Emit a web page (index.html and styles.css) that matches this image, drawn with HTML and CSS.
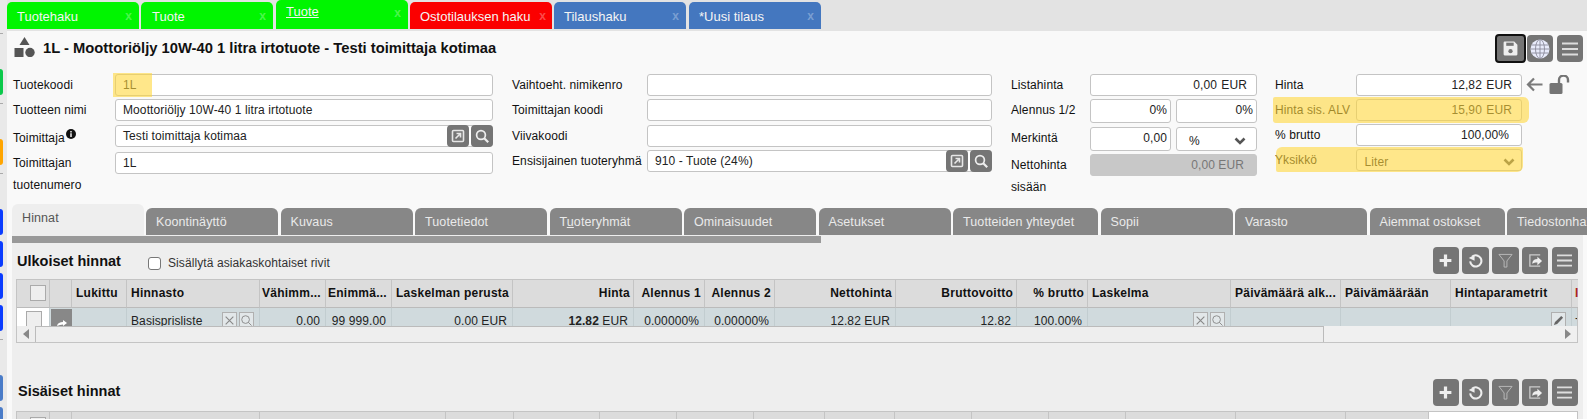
FILE: index.html
```html
<!DOCTYPE html>
<html lang="fi">
<head>
<meta charset="utf-8">
<title>Tuote</title>
<link rel="stylesheet" href="styles.css">
</head>
<body>
<div class="app">
  <aside class="strip">
    <i class="sep s1"></i>
    <i class="dot green d1"></i>
    <i class="sep s2"></i>
    <i class="dot orange d2"></i>
    <i class="sep s2"></i>
    <i class="dot blue d2"></i>
    <i class="dot blue d3"></i>
    <i class="dot blue d3"></i>
    <i class="dot blue d3"></i>
    <i class="sep s3"></i>
    <i class="dot lblue d4"></i>
    <i class="dot lblue d3"></i>
  </aside>
  <div class="main">
    <nav class="tabbar">
      <a class="tab green-t">Tuotehaku<span class="x">x</span></a>
      <a class="tab green-t active">Tuote<span class="x">x</span></a>
      <a class="tab green-t raised"><span class="ul">Tuote</span><span class="x">x</span></a>
      <a class="tab red-t">Ostotilauksen haku<span class="x">x</span></a>
      <a class="tab blue-t">Tilaushaku<span class="x">x</span></a>
      <a class="tab blue-t">*Uusi tilaus<span class="x">x</span></a>
    </nav>

    <header class="head">
      <svg class="shapes" viewBox="0 0 21 20"><path d="M10.5 0l5 8h-10z"/><rect x="0.5" y="11" width="9" height="9"/><circle cx="16" cy="15.500" r="4.700"/></svg>
      <h1 class="title">1L - Moottoriöljy 10W-40 1 litra irtotuote - Testi toimittaja kotimaa</h1>
      <div class="head-btns">
        <button class="btn save"><svg viewBox="0 0 16 16"><path fill="#eee" d="M1.5 2.5a1 1 0 0 1 1-1h9l3 3v9a1 1 0 0 1-1 1h-11a1 1 0 0 1-1-1z"/><rect x="4" y="2.500" width="7" height="3" fill="#757575"/><circle cx="8" cy="10.500" r="2" fill="#757575"/></svg></button>
        <button class="btn globe-b"><svg viewBox="0 0 20 20"><circle cx="10" cy="10" r="9.500" fill="#e8ebfb"/><g fill="none" stroke="#8a8a9a" stroke-width=".9"><ellipse cx="10" cy="10" rx="4.500" ry="9.500"/><path d="M10 .5v19M1.500 6h17M.5 10h19M1.500 14h17"/></g></svg></button>
        <button class="btn burger-b"><svg viewBox="0 0 16 14"><path d="M0 1.500h16M0 7h16M0 12.500h16" stroke="#ddd" stroke-width="2"/></svg></button>
      </div>
    </header>

    <section class="form">
      <div class="col c1">
        <div class="row r-a"><label class="lab">Tuotekoodi</label><div class="inp">1L<b class="mark-code"></b></div></div>
        <div class="row r-b"><label class="lab">Tuotteen nimi</label><div class="inp">Moottoriöljy 10W-40 1 litra irtotuote</div></div>
        <div class="row r-c"><label class="lab low">Toimittaja<svg class="info" viewBox="0 0 10 10"><circle cx="5" cy="5" r="5"/><path d="M4.300 2h1.400v1.400H4.300zM4.300 4.300h1.400V8H4.300z" fill="#fff"/></svg></label><div class="inp with-btns">Testi toimittaja kotimaa<span class="ibtns"><button class="ib"><svg viewBox="0 0 14 14"><rect x="1.500" y="1.500" width="11" height="11" rx="1" fill="none" stroke="#e6e6e6" stroke-width="1.600"/><path d="M4.500 9.500L9 5M5.500 4.500h4v4" fill="none" stroke="#e6e6e6" stroke-width="1.600"/></svg></button><button class="ib"><svg viewBox="0 0 14 14"><circle cx="6" cy="6" r="4.400" fill="none" stroke="#eee" stroke-width="1.700"/><path d="M9.200 9.200l4 4" stroke="#eee" stroke-width="2.200"/></svg></button></span></div></div>
        <div class="row r-d"><label class="lab tall">Toimittajan tuotenumero</label><div class="inp">1L</div></div>
      </div>

      <div class="col c2">
        <div class="row r-a"><label class="lab">Vaihtoeht. nimikenro</label><div class="inp"></div></div>
        <div class="row r-b"><label class="lab">Toimittajan koodi</label><div class="inp"></div></div>
        <div class="row r-c"><label class="lab">Viivakoodi</label><div class="inp"></div></div>
        <div class="row r-e"><label class="lab">Ensisijainen tuoteryhmä</label><div class="inp with-btns">910 - Tuote (24%)<span class="ibtns"><button class="ib"><svg viewBox="0 0 14 14"><rect x="1.500" y="1.500" width="11" height="11" rx="1" fill="none" stroke="#e6e6e6" stroke-width="1.600"/><path d="M4.500 9.500L9 5M5.500 4.500h4v4" fill="none" stroke="#e6e6e6" stroke-width="1.600"/></svg></button><button class="ib"><svg viewBox="0 0 14 14"><circle cx="6" cy="6" r="4.400" fill="none" stroke="#eee" stroke-width="1.700"/><path d="M9.200 9.200l4 4" stroke="#eee" stroke-width="2.200"/></svg></button></span></div></div>
      </div>

      <div class="col c3">
        <div class="row r-a"><label class="lab">Listahinta</label><div class="inp num">0,00 EUR</div></div>
        <div class="row r-f"><label class="lab">Alennus 1/2</label><div class="pair"><div class="inp num tight">0%</div><div class="inp num tight">0%</div></div></div>
        <div class="row r-g"><label class="lab">Merkintä</label><div class="pair"><div class="inp num tight">0,00</div><div class="inp sel unit">%<svg class="chev" viewBox="0 0 12 8"><path d="M1.500 1.500L6 6l4.500-4.500" fill="none" stroke="#555" stroke-width="2.600"/></svg></div></div></div>
        <div class="row r-h"><label class="lab tall">Nettohinta sisään</label><div class="inp num dis">0,00 EUR</div></div>
      </div>

      <div class="col c4">
        <div class="row r-a"><label class="lab">Hinta</label><div class="inp num">12,82 EUR</div>
          <svg class="arrow" viewBox="0 0 17 15"><path d="M16.500 7.500H2M8 1.500L2 7.500l6 6" fill="none" stroke="#7a7a7a" stroke-width="2.200"/></svg>
          <svg class="lock" viewBox="0 0 21 19"><rect x="0.500" y="8" width="13" height="11" rx="1.500" fill="#757575"/><path d="M10 8V5a4.500 4.500 0 0 1 9 0v2.500" fill="none" stroke="#757575" stroke-width="2.400"/></svg>
        </div>
        <div class="row r-i hl hl-a"><label class="lab">Hinta sis. ALV</label><div class="inp num">15,90 EUR</div></div>
        <div class="row r-j"><label class="lab">% brutto</label><div class="inp num pct">100,00%</div></div>
        <div class="row r-k hl hl-b"><label class="lab">Yksikkö</label><div class="inp sel">Liter<svg class="chev" viewBox="0 0 12 8"><path d="M1.500 1.500L6 6l4.500-4.500" fill="none" stroke="#555" stroke-width="2.600"/></svg></div></div>
      </div>
    </section>

    <nav class="subtabs">
      <a class="st current">Hinnat</a>
      <a class="st">Koontinäyttö</a>
      <a class="st">Kuvaus</a>
      <a class="st">Tuotetiedot</a>
      <a class="st">T<u>u</u>oteryhmät</a>
      <a class="st">Ominaisuudet</a>
      <a class="st">Asetukset</a>
      <a class="st wide">Tuotteiden yhteydet</a>
      <a class="st">Sopii</a>
      <a class="st">Varasto</a>
      <a class="st mid">Aiemmat ostokset</a>
      <a class="st last">Tiedostonhallinta</a>
    </nav>

    <section class="panel">
      <div class="bar"></div>
      <div class="sec-head first">
        <h2 class="sec-title">Ulkoiset hinnat</h2>
        <label class="chk"><i class="box"></i>Sisällytä asiakaskohtaiset rivit</label>
        <div class="tools">
          <button class="btn tb"><svg viewBox="0 0 14 14"><path d="M7 1.500v11M1.500 7h11" stroke="#eee" stroke-width="3"/></svg></button>
          <button class="btn tb"><svg viewBox="0 0 16 16"><path d="M4.500 3.800A6 6 0 1 1 2.300 9" fill="none" stroke="#eee" stroke-width="2.200"/><path d="M0.800 5.300L7 1.800V8.300z" fill="#eee"/></svg></button>
          <button class="btn tb"><svg viewBox="0 0 16 16"><path d="M1 1.500h14L9.500 8.500V15h-3V8.500z" fill="none" stroke="#bbb" stroke-width="1"/></svg></button>
          <button class="btn tb"><svg viewBox="0 0 16 16"><path d="M13 2H2v12h11" fill="none" stroke="#ccc" stroke-width="1.400"/><path d="M4.500 11c.5-3 2.500-4.500 5.500-4.500V4l5 4.500-5 4.500v-3c-2.500 0-4 .3-5.500 1.500z" fill="#eee"/></svg></button>
          <button class="btn tb"><svg viewBox="0 0 16 16"><path d="M0 2.500h16M0 8h16M0 13.500h16" stroke="#ddd" stroke-width="2"/></svg></button>
        </div>
      </div>
      <div class="tbl">
        <div class="grid ext hdr">
          <div class="c"><i class="cb"></i></div><div class="c"></div>
          <div class="c">Lukittu</div><div class="c">Hinnasto</div><div class="c cut">Vähimm...</div><div class="c cut">Enimmä...</div>
          <div class="c r">Laskelman perusta</div><div class="c r">Hinta</div><div class="c r">Alennus 1</div><div class="c r">Alennus 2</div>
          <div class="c r">Nettohinta</div><div class="c r">Bruttovoitto</div><div class="c r">% brutto</div><div class="c">Laskelma</div>
          <div class="c">Päivämäärä alk...</div><div class="c">Päivämäärään</div><div class="c">Hintaparametrit</div><div class="c lastc">I</div>
        </div>
        <div class="grid ext body">
          <div class="d white"><i class="cb"></i></div><div class="d dark"><svg viewBox="0 0 12 8"><path d="M1 7c.5-3 3-4 6-4V1l4 3-4 3V5.500C5 5.500 3 6 1 7z" fill="#fff"/></svg></div>
          <div class="d"></div><div class="d">Basisprisliste<span class="mini"><i class="m"><svg viewBox="0 0 10 10"><path d="M1.500 1.500l7 7M8.500 1.500l-7 7" stroke="#888"/></svg></i><i class="m"><svg viewBox="0 0 12 12"><circle cx="5" cy="5" r="4.200" fill="none" stroke="#888"/><path d="M8 8l3.500 3.500" stroke="#888"/></svg></i></span></div>
          <div class="d r">0.00</div><div class="d r">99 999.00</div><div class="d r">0.00 EUR</div><div class="d r"><b>12.82</b>&nbsp;EUR</div>
          <div class="d r">0.00000%</div><div class="d r">0.00000%</div><div class="d r">12.82 EUR</div><div class="d r">12.82</div><div class="d r">100.00%</div>
          <div class="d"><span class="mini"><i class="m"><svg viewBox="0 0 10 10"><path d="M1.500 1.500l7 7M8.500 1.500l-7 7" stroke="#888"/></svg></i><i class="m"><svg viewBox="0 0 12 12"><circle cx="5" cy="5" r="4.200" fill="none" stroke="#888"/><path d="M8 8l3.500 3.500" stroke="#888"/></svg></i></span></div>
          <div class="d"></div><div class="d"></div>
          <div class="d"><span class="mini"><i class="m"><svg viewBox="0 0 12 12"><path d="M1 11l1.200-3.500L9 1l2 2-6.500 6.800z" fill="#666"/></svg></i></span></div>
          <div class="d lastd">-</div>
        </div>
        <div class="scroll">
          <span class="sb-btn"><i class="tri-l"></i></span>
          <span class="thumb"></span>
          <span class="sb-btn end"><i class="tri-r"></i></span>
        </div>
      </div>
      <div class="sec-head second">
        <h2 class="sec-title">Sisäiset hinnat</h2>
        <div class="tools">
          <button class="btn tb"><svg viewBox="0 0 14 14"><path d="M7 1.500v11M1.500 7h11" stroke="#eee" stroke-width="3"/></svg></button>
          <button class="btn tb"><svg viewBox="0 0 16 16"><path d="M4.500 3.800A6 6 0 1 1 2.300 9" fill="none" stroke="#eee" stroke-width="2.200"/><path d="M0.800 5.300L7 1.800V8.300z" fill="#eee"/></svg></button>
          <button class="btn tb"><svg viewBox="0 0 16 16"><path d="M1 1.500h14L9.500 8.500V15h-3V8.500z" fill="none" stroke="#bbb" stroke-width="1"/></svg></button>
          <button class="btn tb"><svg viewBox="0 0 16 16"><path d="M13 2H2v12h11" fill="none" stroke="#ccc" stroke-width="1.400"/><path d="M4.500 11c.5-3 2.500-4.500 5.500-4.500V4l5 4.500-5 4.500v-3c-2.500 0-4 .3-5.500 1.500z" fill="#eee"/></svg></button>
          <button class="btn tb"><svg viewBox="0 0 16 16"><path d="M0 2.500h16M0 8h16M0 13.500h16" stroke="#ddd" stroke-width="2"/></svg></button>
        </div>
      </div>
      <div class="tbl t2">
        <div class="grid int hdr">
          <div class="c"><i class="cb"></i></div><div class="c"></div><div class="c"></div><div class="c"></div><div class="c"></div><div class="c"></div><div class="c"></div><div class="c"></div><div class="c"></div><div class="c"></div><div class="c"></div><div class="c"></div><div class="c"></div><div class="c"></div><div class="c"></div><div class="c"></div><div class="c blank"></div>
        </div>
      </div>
    </section>
  </div>
</div>
</body>
</html>
```

FILE: styles.css
```css
* { box-sizing: border-box; }
html, body { margin: 0; height: 419px; overflow: hidden; }
body { font: 12px "Liberation Sans", Arial, sans-serif; letter-spacing: .1px; color: #111; background: #f9f9f9; }
button { border: 0; padding: 0; font: inherit; }
i { font-style: normal; }

.app { display: flex; width: 1587px; height: 419px; overflow: hidden; }

/* left strip */
.strip { flex: 0 0 7px; background: #e9e9e9; display: flex; flex-direction: column; align-items: flex-start; }
.sep { width: 3px; height: 1px; background: #aaa; flex: none; }
.dot { width: 3px; height: 26px; flex: none; border-radius: 0 3px 3px 0; }
.s1 { margin-top: 33px; }
.s2 { margin-top: 8px; }
.s3 { margin-top: 8px; }
.d1 { margin-top: 35px; }
.d2 { margin-top: 35px; }
.d3 { margin-top: 6px; }
.d4 { margin-top: 35px; }
.green { background: #0ac94a; }
.orange { background: #ffa500; }
.blue { background: #0a3cff; }
.lblue { background: #4a7cc8; }

.main { flex: 1; min-width: 0; }

/* top tabs */
.tabbar { display: flex; align-items: flex-end; height: 31px; background: #e3e3e3; padding-bottom: 2px; gap: 2px; }
.tab { flex: 0 0 132px; height: 27px; border-radius: 5px 5px 0 0; color: #f4f4f4; font-size: 13px; line-height: 29px; padding: 0 7px 0 10px; display: flex; justify-content: space-between; letter-spacing: 0; }
.active { padding-left: 11px; margin-right: 1px; }
.raised { height: 29px; line-height: 24px; }
.ul { text-decoration: underline; }
.raised .x { line-height: 26px; }
.tab.red-t { flex-basis: 142px; padding-right: 6px; }
.green-t { background: #00f500; }
.red-t { background: #fb0000; }
.blue-t { background: #4477bf; }
.blue-t + .blue-t { margin-left: 1px; }
.x { color: rgba(255,255,255,.3); font-weight: 700; font-size: 12px; }

/* title */
.head { display: flex; align-items: flex-start; height: 33px; }
.shapes { width: 21px; height: 20px; margin: 6px 0 0 7px; fill: #555; flex: none; }
.title { margin: 8px 0 0 8px; font-size: 14.750px; line-height: 18px; font-weight: 700; color: #111; letter-spacing: 0; }
.head-btns { margin-left: auto; margin-right: 4px; display: flex; align-items: flex-start; margin-top: 3px; }
.btn { background: #757575; border-radius: 4px; display: flex; align-items: center; justify-content: center; flex: none; }
.save { width: 31px; height: 29px; border: 2px solid #111; margin-right: 1px; }
.save svg { width: 17px; height: 17px; }
.globe-b { width: 26px; height: 27px; margin: 1px 4px 0 0; }
.globe-b svg { width: 20px; height: 20px; }
.burger-b { width: 26px; height: 27px; margin-top: 1px; }
.burger-b svg { width: 16px; height: 14px; }

/* form */
.form { height: 140px; display: grid; grid-template-columns: 505px 499px 264px 1fr; padding-top: 10px; }
.col { display: flex; flex-direction: column; }
.c1 { padding-left: 6px; }
.row { display: flex; align-items: flex-start; position: relative; flex: none; }
.lab { flex: none; line-height: 22px; color: #111; }
.c1 .lab { width: 102px; }
.c2 .lab { width: 135px; }
.c3 .lab { width: 79px; }
.c4 .lab { width: 80.500px; }
.inp { flex: 1; height: 22px; background: #fff; border: 1px solid #c4c4c4; border-radius: 3px; line-height: 20px; padding: 0 7px; min-width: 0; position: relative; white-space: nowrap; color: #222; }
.num { text-align: right; padding-right: 9px; word-spacing: 1px; }
.pct { padding-right: 12px; }
.tight { padding-right: 3px; height: 100%; }
.c1 .inp { flex: 0 0 378px; }
.c2 .inp { flex: 0 0 345px; }
.c3 .inp, .c3 .pair { flex: 0 0 167px; }
.c4 .inp { flex: 0 0 166.500px; }
.r-a { height: 22px; }
.r-b { height: 22px; margin-top: 3px; }
.r-c { height: 22px; margin-top: 4px; }
.r-d { height: 22px; margin-top: 5px; }
.r-e { height: 22px; margin-top: 3px; }
.r-f { height: 24px; margin-top: 3px; }
.r-g { height: 24px; margin-top: 4px; }
.r-h { height: 22px; margin-top: 3px; }
.r-i { height: 22px; margin-top: 3px; }
.r-j { height: 22px; margin-top: 3px; }
.r-k { height: 22px; margin-top: 3px; }
.low { line-height: 26px; height: 22px; }
.tall { white-space: normal; }
.info { width: 10px; height: 10px; fill: #111; margin-left: 1px; vertical-align: 3px; }
.pair { display: flex; justify-content: space-between; height: 100%; }
.pair .inp { flex: 0 0 81px; }
.dis { background: #c8c8c8; border-color: #c8c8c8; color: #777; padding-right: 12px; word-spacing: 0; }
.sel { padding-left: 8px; line-height: 24px; }
.unit { padding-left: 12px; line-height: 26px; height: 100%; }
.chev { position: absolute; right: 6px; top: 8px; width: 12px; height: 8px; }
.pair .chev { right: 10px; top: 9px; }
.with-btns { padding-right: 46px; }
.ibtns { position: absolute; right: -1px; top: -1px; display: flex; gap: 2px; }
.ib { width: 22px; height: 22px; background: #757575; border-radius: 4px; display: flex; align-items: center; justify-content: center; }
.ib svg { width: 14px; height: 14px; }
.arrow { width: 17px; height: 15px; margin: 3px 0 0 4px; flex: none; }
.lock { width: 21px; height: 19px; margin: 1px 0 0 6px; flex: none; }

/* highlighter marks, laid over the fields */
.hl::after, .mark-code { content: ""; position: absolute; background: rgba(255,215,60,.6); pointer-events: none; }
.hl-a::after { left: -2px; width: 255.500px; top: -2px; bottom: -2px; border-radius: 2px 6px 6px 3px; }
.hl-b::after { left: 1px; width: 247px; top: -2px; bottom: -1px; border-radius: 6px 2px 6px 2px; }
.mark-code { left: -3px; top: -2px; width: 39px; height: 24px; }

/* sub tabs */
.subtabs { height: 31px; display: flex; align-items: flex-end; padding-left: 5px; overflow: hidden; }
.st { flex: 0 0 132px; height: 27px; margin-right: 2.500px; background: #878787; color: #eaeaea; border-radius: 6px 6px 0 0; line-height: 29px; padding-left: 10px; font-size: 12.500px; white-space: nowrap; }
.current { height: 31px; margin-right: 2px; background: #eee; color: #555; line-height: 28px; }
.wide { flex-basis: 145px; }
.mid { flex-basis: 135px; }
.last { flex: none; width: 120px; margin-right: 0; }

/* panel */
.panel { margin-left: 5px; width: 1571px; height: 184px; background: #eee; padding-top: 1px; }
.bar { width: 809px; height: 7px; background: #999; }
.sec-head { display: flex; align-items: flex-start; }
.first { height: 36px; padding: 4px 5px 0 5px; }
.second { height: 32px; margin-top: 36px; padding: 0 5px 0 6px; }
.sec-title { margin: 5px 0 0; font-size: 14.500px; line-height: 18px; font-weight: 700; color: #111; letter-spacing: 0; }
.second .sec-title { margin-top: 3px; }
.chk { display: flex; align-items: center; margin: 8px 0 0 27px; color: #333; line-height: 16px; letter-spacing: .1px; }
.box { width: 13px; height: 13px; background: #fff; border: 1px solid #777; border-radius: 3px; margin-right: 7px; }
.tools { margin-left: auto; display: flex; gap: 3.250px; }
.tb { width: 26.500px; height: 27px; }
.tb svg { width: 15px; height: 15px; }
.tbl { width: 1562px; margin-left: 4px; border: 1px solid #c4c4c4; background: #eee; }
.t2 { border-bottom: 0; }
.grid { display: grid; }
.ext { grid-template-columns: 33px 22px 55px 133px 66px 66px 121px 121px 71px 70px 121px 121px 71px 143px 110px 110px 121px 1fr; }
.int { grid-template-columns: 33px 22px 188px 186px 68px 86px 77px 77px 71px 70px 77px 77px 77px 110px 110px 83px 1fr; }
.hdr { height: 28px; }
.c { background: #dcdcdc; border-right: 1px solid #c4c4c4; border-bottom: 1px solid #bbb; font-weight: 700; line-height: 27px; padding: 0 4px; white-space: nowrap; overflow: hidden; color: #111; letter-spacing: .25px; position: relative; }
.c.r { text-align: right; padding-right: 3px; }
.c.cut { padding: 0 2px; }
.c.blank { background: #fff; border-right: 0; }
.lastc { color: #a22; border-right: 0; padding: 0 3px; }
.cb { display: block; width: 16px; height: 16px; border: 1px solid #aaa; background: #eee; margin: 5px 0 0 9px; }
.body { height: 18px; overflow: hidden; background: #d0dadd; }
.d { border-right: 1px solid #c2cdd0; height: 18px; line-height: 26px; padding: 0 4px; white-space: nowrap; overflow: hidden; color: #222; position: relative; }
.d.r { text-align: right; padding-right: 5px; }
.d .cb { margin-top: 3px; }
.lastd { border-right: 0; line-height: 20px; padding: 0 3px; }
.white { background: #fff; padding: 0; }
.dark { background: #888; margin: 1px 0 0 1px; padding: 0; display: flex; justify-content: center; border-right: 0; }
.dark svg { width: 12px; height: 8px; margin-top: 10px; }
.mini { position: absolute; right: 5px; top: 4px; display: flex; gap: 2px; }
.m { display: flex; align-items: center; justify-content: center; width: 15px; height: 16px; border: 1px solid #b0b0b0; background: #e2e7e9; }
.m svg { width: 11px; height: 11px; }
.scroll { height: 16px; display: flex; background: #f0f0f0; }
.sb-btn { flex: 0 0 18px; display: flex; align-items: center; justify-content: center; background: #eee; }
.end { margin-left: auto; background: none; }
.thumb { width: 1289px; border: 1px solid #bbb; border-bottom: 0; background: #eee; }
.tri-l { border: 5px solid transparent; border-right: 6px solid #888; border-left: 0; }
.tri-r { border: 5px solid transparent; border-left: 6px solid #888; border-right: 0; }
```
